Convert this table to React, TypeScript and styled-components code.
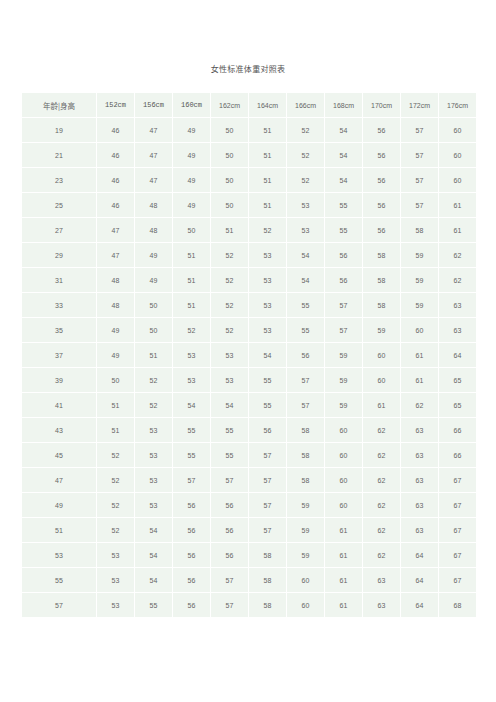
import React from "react";
import styled, { createGlobalStyle } from "styled-components";

const heights = ["152cm", "156cm", "160cm", "162cm", "164cm", "166cm", "168cm", "170cm", "172cm", "176cm"];

const rows: [number, number[]][] = [
  [19, [46, 47, 49, 50, 51, 52, 54, 56, 57, 60]],
  [21, [46, 47, 49, 50, 51, 52, 54, 56, 57, 60]],
  [23, [46, 47, 49, 50, 51, 52, 54, 56, 57, 60]],
  [25, [46, 48, 49, 50, 51, 53, 55, 56, 57, 61]],
  [27, [47, 48, 50, 51, 52, 53, 55, 56, 58, 61]],
  [29, [47, 49, 51, 52, 53, 54, 56, 58, 59, 62]],
  [31, [48, 49, 51, 52, 53, 54, 56, 58, 59, 62]],
  [33, [48, 50, 51, 52, 53, 55, 57, 58, 59, 63]],
  [35, [49, 50, 52, 52, 53, 55, 57, 59, 60, 63]],
  [37, [49, 51, 53, 53, 54, 56, 59, 60, 61, 64]],
  [39, [50, 52, 53, 53, 55, 57, 59, 60, 61, 65]],
  [41, [51, 52, 54, 54, 55, 57, 59, 61, 62, 65]],
  [43, [51, 53, 55, 55, 56, 58, 60, 62, 63, 66]],
  [45, [52, 53, 55, 55, 57, 58, 60, 62, 63, 66]],
  [47, [52, 53, 57, 57, 57, 58, 60, 62, 63, 67]],
  [49, [52, 53, 56, 56, 57, 59, 60, 62, 63, 67]],
  [51, [52, 54, 56, 56, 57, 59, 61, 62, 63, 67]],
  [53, [53, 54, 56, 56, 58, 59, 61, 62, 64, 67]],
  [55, [53, 54, 56, 57, 58, 60, 61, 63, 64, 67]],
  [57, [53, 55, 56, 57, 58, 60, 61, 63, 64, 68]],
];

const GlobalStyle = createGlobalStyle`
  body {
    margin: 0;
    background: #fff;
    font-family: "Liberation Sans", Arial, sans-serif;
  }
`;

const Page = styled.div`
  width: 496px;
  height: 702px;
  padding-top: 64px;
  box-sizing: border-box;
  display: flex;
  flex-direction: column;
  align-items: center;
`;

const Title = styled.h1`
  margin: 0 0 19px;
  font-family: "Noto Sans CJK SC", sans-serif;
  font-weight: 400;
  font-size: 8px;
  line-height: 10px;
  color: #555;
  letter-spacing: 0.3px;
`;

const Grid = styled.div`
  display: grid;
  grid-template-columns: 74px repeat(10, 37px);
  grid-auto-rows: 24px;
  gap: 1px;
  background: #fff;
  margin-left: 2px;
`;

const Cell = styled.div<{ $mono?: boolean; $cjk?: boolean }>`
  background: #eff5ef;
  display: flex;
  align-items: center;
  justify-content: center;
  color: ${(p) => (p.$mono ? "#555" : "#666")};
  font-size: ${(p) => (p.$cjk ? "7.5px" : "7px")};
  font-family: ${(p) =>
    p.$cjk
      ? `"Noto Sans CJK SC", sans-serif`
      : p.$mono
      ? `"Liberation Mono", monospace`
      : `"Liberation Sans", Arial, sans-serif`};
`;

export default function App() {
  return (
    <>
      <GlobalStyle />
      <Page>
        <Title>女性标准体重对照表</Title>
        <Grid>
          <Cell $cjk>年龄|身高</Cell>
          {heights.map((h, i) => (
            <Cell key={h} $mono={i < 3}>
              {h}
            </Cell>
          ))}
          {rows.map(([age, vals]) => (
            <React.Fragment key={age}>
              <Cell>{age}</Cell>
              {vals.map((v, i) => (
                <Cell key={i}>{v}</Cell>
              ))}
            </React.Fragment>
          ))}
        </Grid>
      </Page>
    </>
  );
}
